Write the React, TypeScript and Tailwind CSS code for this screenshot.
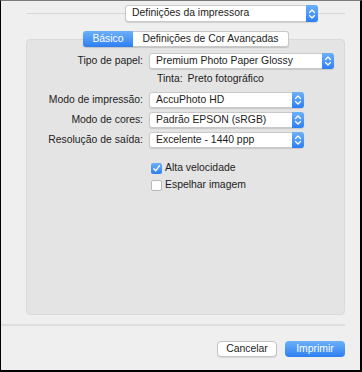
import React from "react";

const Arrows = () => (
  <svg width="12" height="16" viewBox="0 0 12 16" className="block">
    <path d="M3.5 6.5 L6 4 L8.5 6.5" fill="none" stroke="white" strokeWidth="1.3" strokeLinecap="round" strokeLinejoin="round" />
    <path d="M3.5 9.5 L6 12 L8.5 9.5" fill="none" stroke="white" strokeWidth="1.3" strokeLinecap="round" strokeLinejoin="round" />
  </svg>
);

const Popup = ({ text, w, h = "h-[16px]" }: { text: string; w: string; h?: string }) => (
  <div
    className={`${w} ${h} flex items-stretch bg-white rounded-[3px] border border-[#c9c9c9] shadow-[0_1px_1px_rgba(0,0,0,0.12)]`}
  >
    <div className="flex-1 flex items-center pl-[6px] text-[#1d1d1d] whitespace-nowrap overflow-hidden">
      {text}
    </div>
    <div className="w-[12px] -my-px -mr-px rounded-r-[3px] bg-gradient-to-b from-[#6db0f8] to-[#2c7ff2] flex items-center justify-center">
      <Arrows />
    </div>
  </div>
);

const Row = ({ label, value, w, mt }: { label: string; value: string; w: string; mt: string }) => (
  <div className={`flex items-center ${mt}`}>
    <div className="w-[117px] text-right pr-px text-[#1d1d1d] whitespace-nowrap">{label}</div>
    <div className="ml-[5px]">
      <Popup text={value} w={w} />
    </div>
  </div>
);

const Check = ({ label, checked, mt }: { label: string; checked?: boolean; mt: string }) => (
  <div className={`flex items-center h-[13px] ml-[124px] ${mt}`}>
    {checked ? (
      <div className="w-[11px] h-[11px] rounded-[2px] bg-gradient-to-b from-[#6db0f8] to-[#2c7ff2] flex items-center justify-center">
        <svg width="9" height="9" viewBox="0 0 9 9">
          <path d="M1.8 4.8 L3.7 6.8 L7.4 1.8" fill="none" stroke="white" strokeWidth="1.4" strokeLinecap="round" strokeLinejoin="round" />
        </svg>
      </div>
    ) : (
      <div className="w-[11px] h-[11px] rounded-[2px] bg-white border border-[#b9b9b9]" />
    )}
    <span className="ml-[3px] text-[#1d1d1d]">{label}</span>
  </div>
);

export default function App() {
  return (
    <div className="w-[362px] h-[372px] bg-[#efefef] border-t border-l border-r-2 border-b-2 border-t-[#7a7a7a] border-l-black border-r-black border-b-black flex flex-col font-['Liberation_Sans',Arial,sans-serif] text-[10.4px] leading-none">
      {/* top printer settings popup */}
      <div className="pt-[4px] pl-[26px] pr-[15px] flex items-center">
        <div className="flex-1 h-px bg-[#d6d6d6]" />
        <Popup text="Definições da impressora" w="w-[193px]" h="h-[17px]" />
        <div className="w-[27px] h-px bg-[#d6d6d6]" />
      </div>

      <div className="mt-[9px] pl-[25px] pr-[15px] flex flex-col">
        {/* tabs */}
        <div className="relative z-10 flex justify-center -mb-[8px] pl-px">
          <div className="flex h-[16px] rounded-[3px] shadow-[0_1px_1px_rgba(0,0,0,0.15)]">
            <div className="w-[50px] flex items-center justify-center rounded-l-[3px] bg-gradient-to-b from-[#6db0f8] to-[#2c7ff2] text-white">
              Básico
            </div>
            <div className="w-[156px] flex items-center justify-center rounded-r-[3px] bg-white border border-l-0 border-[#c9c9c9] text-[#1d1d1d]">
              Definições de Cor Avançadas
            </div>
          </div>
        </div>

        {/* panel */}
        <div className="h-[276px] bg-[#e4e4e4] border border-[#dadada] rounded-[4px] pt-[13px] flex flex-col">
          <Row label="Tipo de papel:" value="Premium Photo Paper Glossy" w="w-[185px]" mt="mt-0" />
          <div className="h-[13px] mt-[4px] ml-[130px] flex items-center text-[#1d1d1d]">
            <span>Tinta:</span>
            <span className="ml-[5px]">Preto fotográfico</span>
          </div>
          <Row label="Modo de impressão:" value="AccuPhoto HD" w="w-[155px]" mt="mt-[6px]" />
          <Row label="Modo de cores:" value="Padrão EPSON (sRGB)" w="w-[155px]" mt="mt-[4px]" />
          <Row label="Resolução de saída:" value="Excelente - 1440 ppp" w="w-[155px]" mt="mt-[4px]" />
          <Check label="Alta velocidade" checked mt="mt-[14px]" />
          <Check label="Espelhar imagem" mt="mt-[4px]" />
        </div>
      </div>

      <div className="mt-[9px] mr-[15px] h-[2px] bg-[#dedede]" />

      <div className="mt-[15px] pr-[15px] flex justify-end gap-[8px]">
        <div className="w-[60px] h-[16px] flex items-center justify-center bg-white border border-[#c4c4c4] rounded-[4px] shadow-[0_1px_1px_rgba(0,0,0,0.1)] text-[#1d1d1d]">
          Cancelar
        </div>
        <div className="w-[60px] h-[16px] flex items-center justify-center rounded-[4px] bg-gradient-to-b from-[#6db0f8] to-[#2c7ff2] text-white">
          Imprimir
        </div>
      </div>
    </div>
  );
}
